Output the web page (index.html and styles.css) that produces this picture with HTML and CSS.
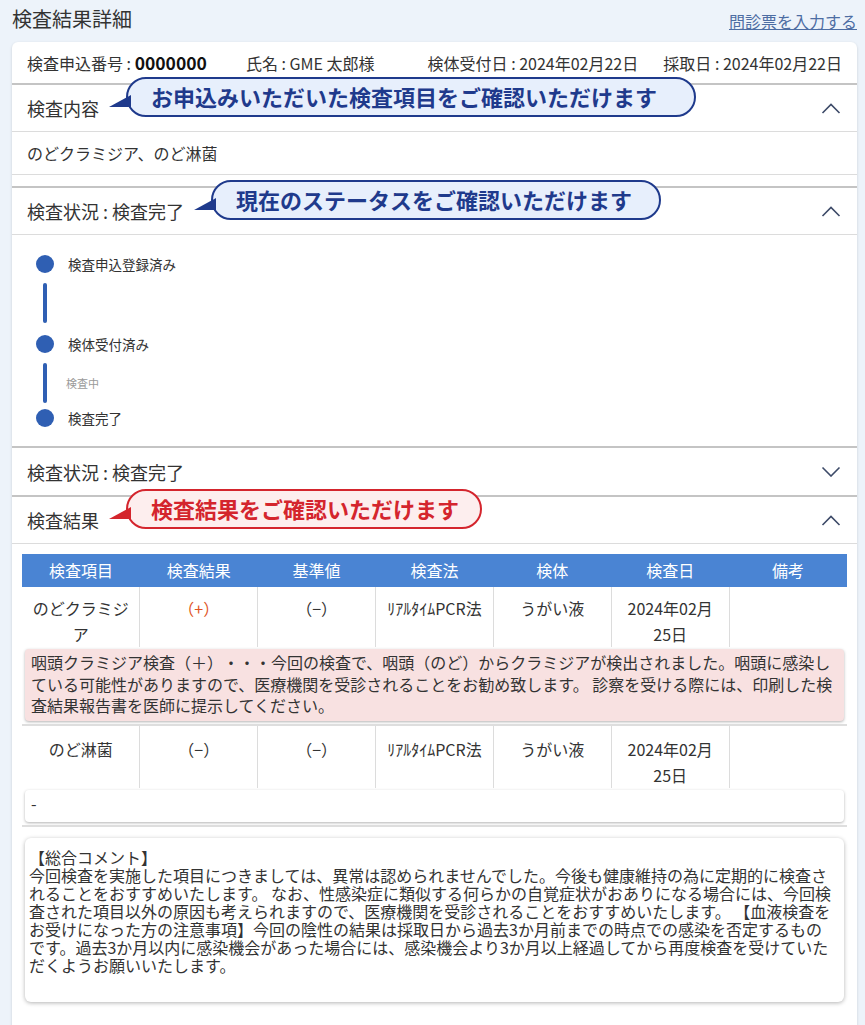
FILE: index.html
```html
<!DOCTYPE html>
<html lang="ja">
<head>
<meta charset="utf-8">
<title>検査結果詳細</title>
<link rel="stylesheet" href="styles.css">
</head>
<body>
<div class="page">
  <div class="top">
    <h1 class="title">検査結果詳細</h1>
    <a class="link" href="#">問診票を入力する</a>
  </div>
  <div class="card">
    <div class="info">
      <span>検査申込番号 : <b class="num">0000000</b></span>
      <span class="info-name">氏名 : GME 太郎様</span>
      <span class="info-recv">検体受付日 : 2024年02月22日</span>
      <span class="info-date">採取日 : 2024年02月22日</span>
    </div>

    <section class="panel">
      <div class="ph">
        <span class="ph-title">検査内容<span class="bubble blue b1">お申込みいただいた検査項目をご確認いただけます</span></span>
        <svg class="chev" viewBox="0 0 20 11" width="20" height="11"><polyline points="1.5,10 10,1.5 18.5,10"/></svg>
      </div>
      <div class="pb pb-items">のどクラミジア、のど淋菌</div>
    </section>

    <section class="panel">
      <div class="ph">
        <span class="ph-title">検査状況 : 検査完了<span class="bubble blue b2">現在のステータスをご確認いただけます</span></span>
        <svg class="chev" viewBox="0 0 20 11" width="20" height="11"><polyline points="1.5,10 10,1.5 18.5,10"/></svg>
      </div>
      <div class="pb timeline">
        <div class="tl-step"><span class="dot"></span><span class="tl-label">検査申込登録済み</span></div>
        <div class="tl-seg seg1"><span class="bar"></span></div>
        <div class="tl-step step2"><span class="dot"></span><span class="tl-label">検体受付済み</span></div>
        <div class="tl-seg seg2"><span class="bar"></span><span class="tl-sub">検査中</span></div>
        <div class="tl-step step3"><span class="dot"></span><span class="tl-label">検査完了</span></div>
      </div>
    </section>

    <section class="panel">
      <div class="ph ph-collapsed">
        <span class="ph-title">検査状況 : 検査完了</span>
        <svg class="chev" viewBox="0 0 20 11" width="20" height="11"><polyline points="1.5,1.5 10,10 18.5,1.5"/></svg>
      </div>
    </section>

    <section class="panel">
      <div class="ph">
        <span class="ph-title">検査結果<span class="bubble red b3">検査結果をご確認いただけます</span></span>
        <svg class="chev" viewBox="0 0 20 11" width="20" height="11"><polyline points="1.5,10 10,1.5 18.5,10"/></svg>
      </div>
      <div class="pb results">
        <table class="rt">
          <thead>
            <tr><th>検査項目</th><th>検査結果</th><th>基準値</th><th>検査法</th><th>検体</th><th>検査日</th><th>備考</th></tr>
          </thead>
          <tbody>
            <tr class="row">
              <td>のどクラミジア</td><td class="pos">（+）</td><td>（−）</td><td>ﾘｱﾙﾀｲﾑPCR法</td><td>うがい液</td><td>2024年02月25日</td><td></td>
            </tr>
            <tr class="note-row">
              <td colspan="7"><div class="note pink">咽頭クラミジア検査（＋）・・・今回の検査で、咽頭（のど）からクラミジアが検出されました。咽頭に感染している可能性がありますので、医療機関を受診されることをお勧め致します。 診察を受ける際には、印刷した検査結果報告書を医師に提示してください。</div></td>
            </tr>
            <tr class="row">
              <td>のど淋菌</td><td>（−）</td><td>（−）</td><td>ﾘｱﾙﾀｲﾑPCR法</td><td>うがい液</td><td>2024年02月25日</td><td></td>
            </tr>
            <tr class="note-row">
              <td colspan="7"><div class="note">-</div></td>
            </tr>
          </tbody>
        </table>
        <div class="comment">【総合コメント】<br>今回検査を実施した項目につきましては、異常は認められませんでした。今後も健康維持の為に定期的に検査されることをおすすめいたします。 なお、性感染症に類似する何らかの自覚症状がおありになる場合には、今回検査された項目以外の原因も考えられますので、医療機関を受診されることをおすすめいたします。 【血液検査をお受けになった方の注意事項】今回の陰性の結果は採取日から過去3か月前までの時点での感染を否定するものです。過去3か月以内に感染機会があった場合には、感染機会より3か月以上経過してから再度検査を受けていただくようお願いいたします。</div>
      </div>
    </section>
  </div>
</div>
</body>
</html>
```

FILE: styles.css
```css
* { box-sizing: border-box; }
html, body {
  margin: 0;
  background: #edf3fa;
  font-family: "Noto Sans CJK JP", "Noto Sans", sans-serif;
  color: #333;
  text-spacing-trim: space-all;
}
.page {
  padding: 4px 8px 0 12px;
}
.top {
  display: flex;
  justify-content: space-between;
  align-items: flex-end;
  height: 30px;
  margin-bottom: 8px;
}
.title {
  margin: 0;
  font-size: 20px;
  font-weight: 400;
  line-height: 30px;
}
.link {
  font-size: 16px;
  line-height: 26px;
  color: #4d6da3;
  text-decoration: underline;
}
.card {
  background: #fff;
  border-radius: 6px;
  box-shadow: 0 1px 3px rgba(0,0,0,0.15);
  min-height: 1000px;
}
.info {
  display: flex;
  align-items: center;
  height: 41px;
  padding: 0 15px;
  font-size: 16px;
  white-space: nowrap;
}
.info-name { margin-left: 39px; }
.info-recv { margin-left: 53px; }
.info-date { margin-left: auto; }
.num { font-size: 17.5px; font-weight: 700; color: #111; }

.panel { border-top: 2px solid #c4c4c4; }
.ph {
  display: flex;
  align-items: center;
  justify-content: space-between;
  height: 47px;
  padding: 0 16px 0 15px;
  border-bottom: 1px solid #dcdcdc;
}
.ph-collapsed { border-bottom: 0; }
.ph-title {
  position: relative;
  font-size: 18px;
  line-height: 24px;
  white-space: nowrap;
}
.chev { fill: none; stroke: #3d4a68; stroke-width: 1.6; }

.bubble {
  position: absolute;
  left: calc(100% + 27px);
  top: -19px;
  height: 40px;
  border: 2px solid;
  border-radius: 20px;
  padding-left: 23px;
  font-size: 22px;
  font-weight: 700;
  line-height: 35px;
  white-space: nowrap;
}
.bubble::before {
  content: "";
  position: absolute;
  left: -19px;
  top: 16px;
  width: 22px;
  height: 12px;
  background: currentColor;
  clip-path: polygon(0 100%, 100% 0, 100% 100%);
}
.blue { background: #e7effc; border-color: #1f3a8c; color: #1f3a8c; }
.red { background: #fdeeee; border-color: #d4252d; color: #d4252d; }
.b1 { width: 570px; }
.b2 { width: 450px; }
.b3 { width: 356px; }

.pb-items {
  height: 43px;
  padding: 0 15px;
  display: flex;
  align-items: center;
  font-size: 16px;
  border-bottom: 1px solid #dcdcdc;
  margin-bottom: 11px;
}

.timeline { padding: 20px 0 19px 24px; }
.tl-step { display: flex; align-items: center; height: 18px; }
.dot {
  width: 18px; height: 18px; border-radius: 50%;
  background: #2f5fb3;
  flex: none;
}
.tl-label { margin-left: 14px; font-size: 13.5px; color: #333; }
.tl-seg { display: flex; align-items: center; height: 40px; }
.bar {
  width: 4px; height: 40px; margin: 0 7px;
  background: #2f5fb3; border-radius: 2px; flex: none;
}
.seg1 { margin: 10px 0 12px; }
.seg2 { margin: 10px 0 6px; }
.tl-sub { margin-left: 12px; font-size: 11px; color: #9a9a9a; }

.results { padding: 10px 10px 0; }
.rt {
  width: 100%;
  border-collapse: collapse;
  table-layout: fixed;
  font-size: 16px;
}
.rt th {
  background: #4a84d3;
  color: #fff;
  font-weight: 400;
  line-height: 25px;
  padding: 4px 6px;
}
.rt .row td {
  text-align: center;
  vertical-align: top;
  line-height: 26px;
  padding: 8px 8px 0;
  height: 60px;
  border-left: 1px solid #dcdcdc;
}
.rt .row td:first-child { border-left: 0; }
.rt .row:nth-child(3) td { padding-top: 10px; height: 62px; }
.pos { color: #e0541e; }
.note-row td {
  padding: 2px 3px 3px;
  border-bottom: 2px solid #dedede;
}
.note {
  background: #fff;
  border-radius: 4px;
  box-shadow: 0 1px 3px rgba(0,0,0,0.3);
  padding: 3px 6px 4px;
  font-size: 16px;
  line-height: 21.5px;
  min-height: 32px;
}
.pink { background: #f8e1e1; }
.comment {
  margin: 11px 3px 0;
  background: #fff;
  border-radius: 6px;
  box-shadow: 0 1px 4px rgba(0,0,0,0.3);
  padding: 10px 10px 28px 4px;
  font-size: 16px;
  line-height: 18px;
  min-height: 162px;
}
```
